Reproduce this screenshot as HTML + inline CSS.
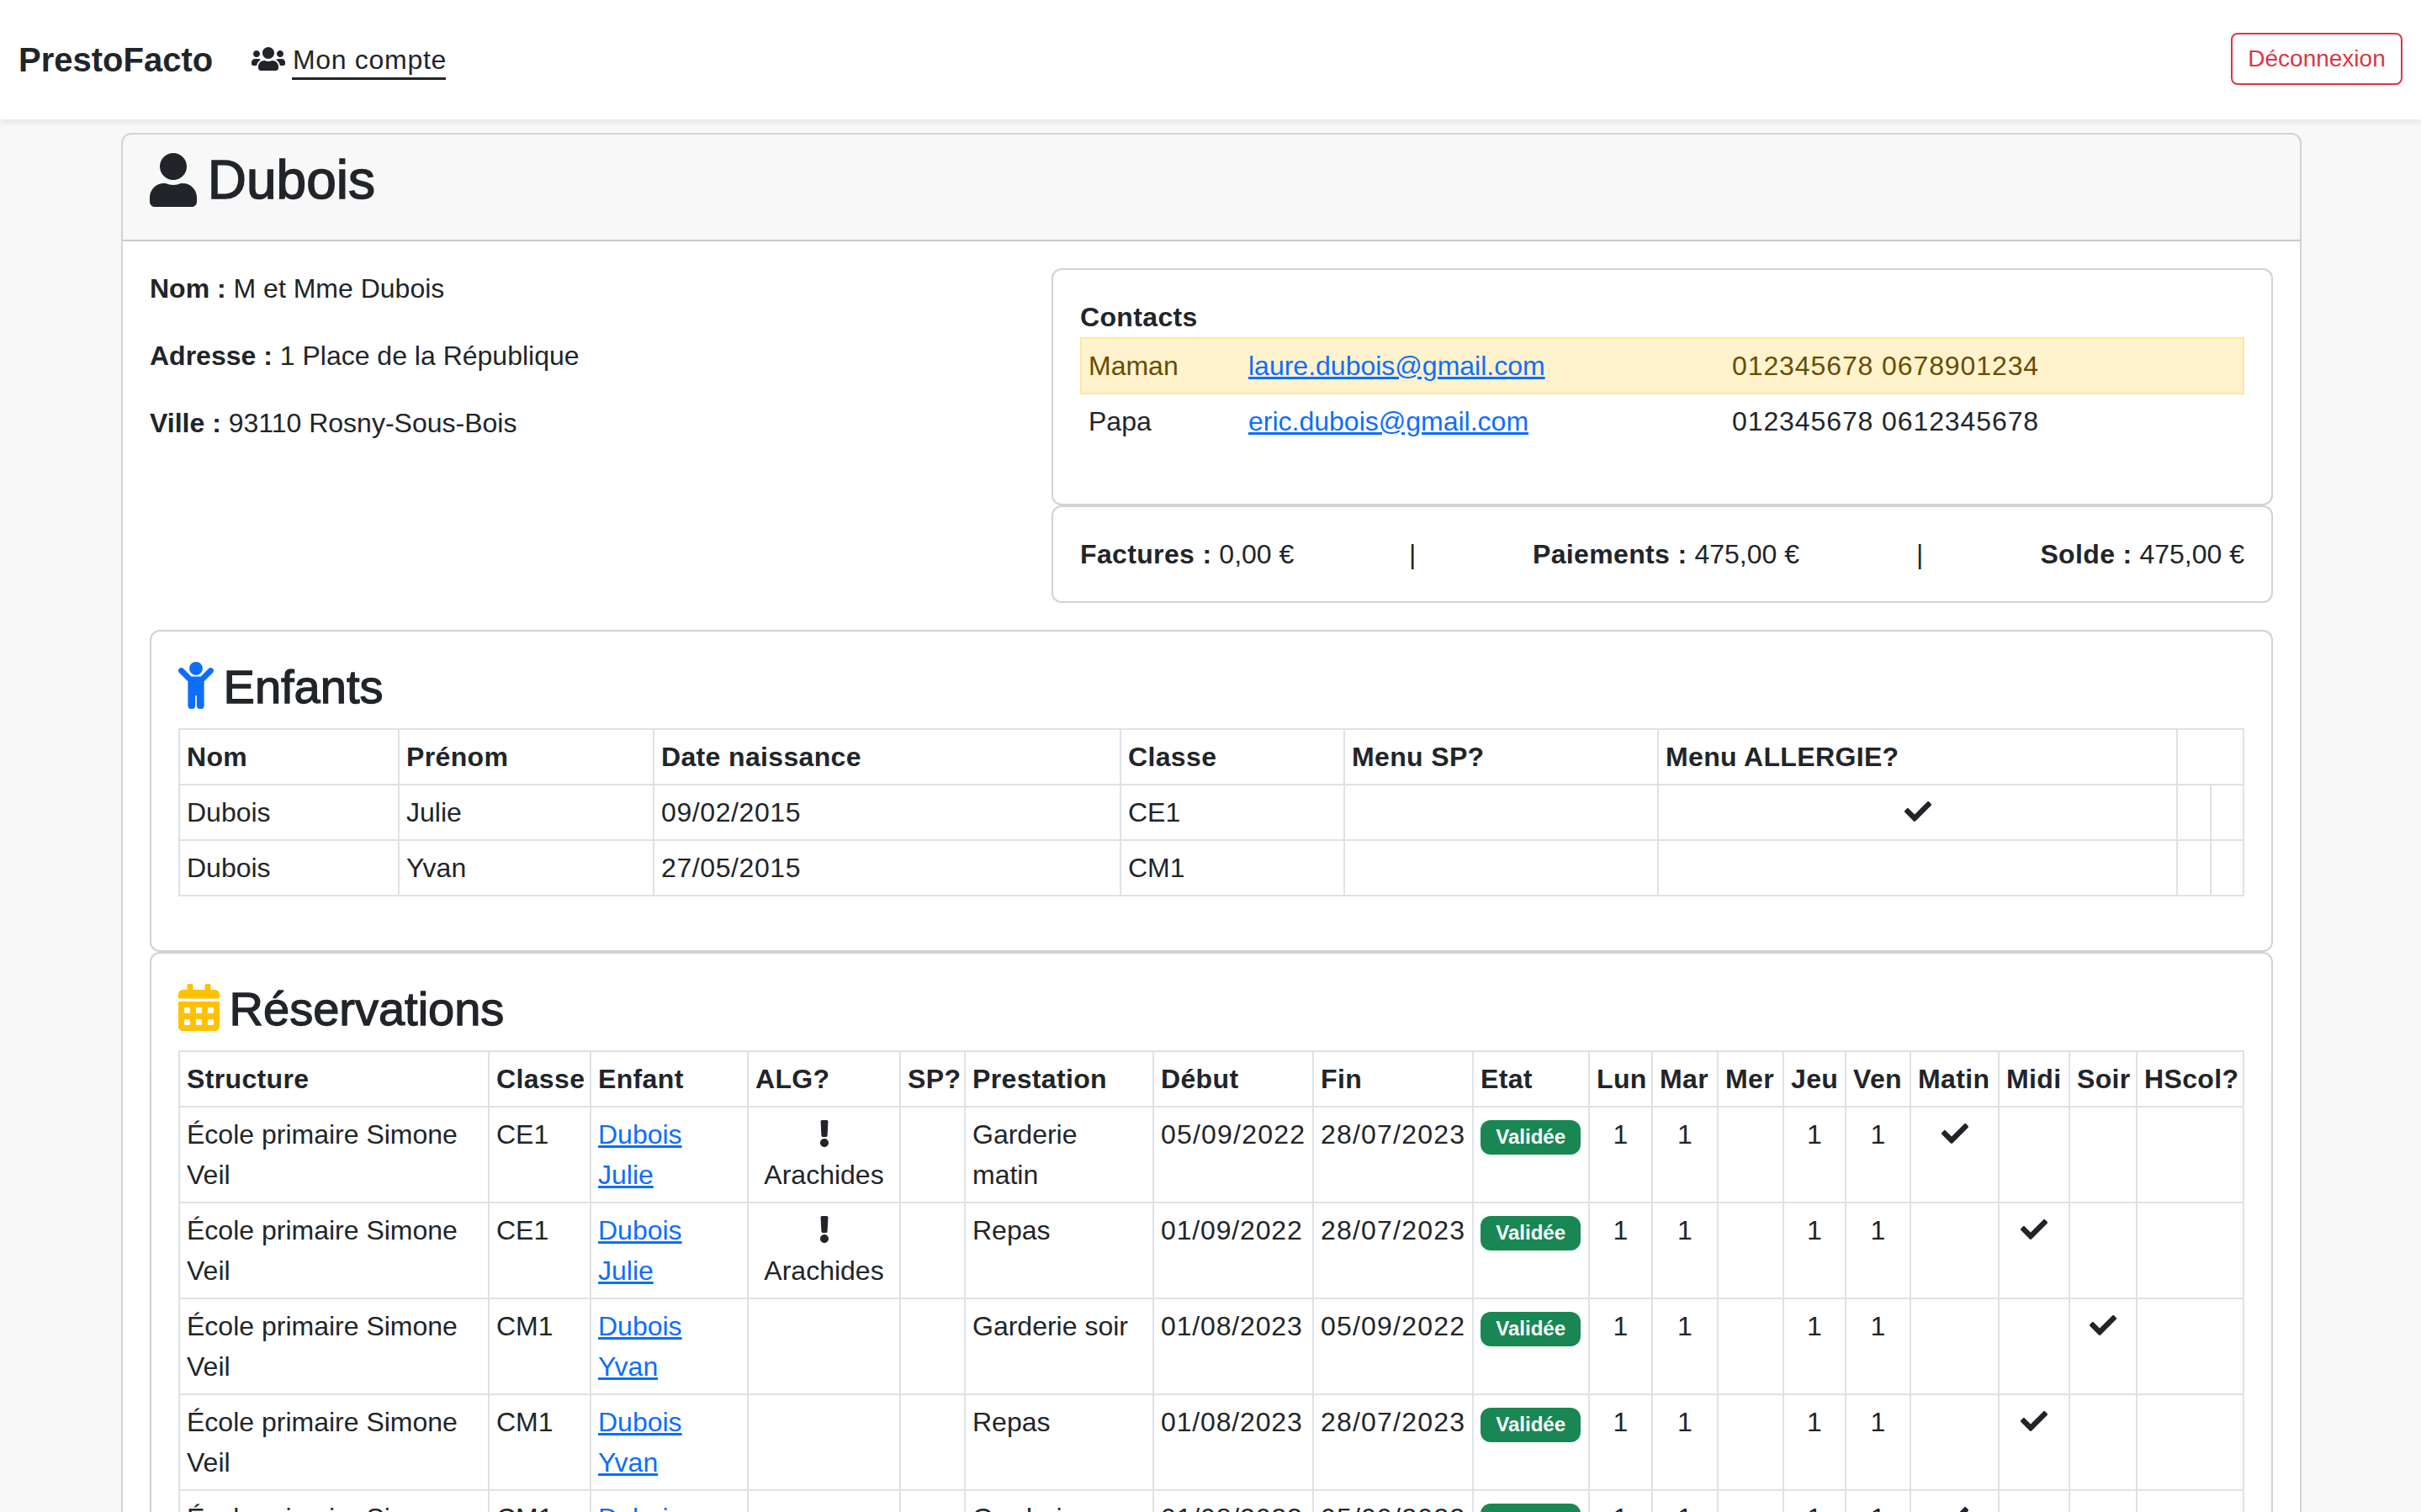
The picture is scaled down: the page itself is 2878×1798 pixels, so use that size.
<!DOCTYPE html>
<html><head><meta charset="utf-8">
<style>
*{box-sizing:border-box}
html,body{margin:0;padding:0}
body{width:2878px;height:1798px;overflow:hidden;position:relative;background:#f8f8f8;
font-family:"Liberation Sans",sans-serif;font-size:32px;line-height:48px;color:#212529}
.abs{position:absolute}
nav{position:absolute;left:0;top:0;width:2878px;height:142px;background:#fff;box-shadow:0 4px 8px rgba(0,0,0,.075)}
.brand{position:absolute;left:22px;top:41px;font-size:40px;line-height:60px;font-weight:bold;color:#212529}
.navlink{position:absolute;left:299px;top:47px;line-height:48px;white-space:nowrap}
.navlink span{letter-spacing:.7px}
.uline{position:absolute;left:347px;top:92px;width:183px;height:3px;background:#212529}
.btn{position:absolute;left:2652px;top:39px;width:204px;height:62px;border:2px solid #dc3545;border-radius:8px;color:#dc3545;font-size:28px;line-height:42px;text-align:center;padding-top:8px}
svg.fa{display:inline-block;height:1em;vertical-align:-.125em;overflow:visible;fill:currentColor}
.card{position:absolute;left:144px;top:158px;width:2592px;height:1700px;background:#fff;border:2px solid rgba(0,0,0,.175);border-radius:12px}
.card-h{position:absolute;left:0;top:0;width:2588px;height:126.8px;background:rgba(33,37,41,.03);border-bottom:2px solid rgba(0,0,0,.175);border-radius:10px 10px 0 0}
.h2{position:absolute;left:32px;top:16px;font-size:64px;line-height:76.8px;font-weight:500;white-space:nowrap;-webkit-text-stroke:1.5px #212529}
.h2 svg{margin-right:-5px}
.h3 svg{margin-right:-4px}
p.info{margin:0 0 32px 0;white-space:nowrap}
p.info b{letter-spacing:0}
b,th,.bold{font-weight:bold;letter-spacing:.35px}
.num{letter-spacing:1.2px}
.box{position:absolute;background:#fff;border:2px solid rgba(0,0,0,.175);border-radius:12px;padding:32px}
.h3{font-size:56px;line-height:67.2px;margin:0 0 16px 0;font-weight:500;white-space:nowrap;-webkit-text-stroke:1.3px #212529}
table{border-collapse:collapse;table-layout:fixed}
td,th{padding:8px 8px;border:2px solid #dee2e6;vertical-align:top;text-align:left;white-space:nowrap;overflow:visible}
.nob td{border-color:transparent}
a{color:#0d6efd;text-decoration:underline}
.c{text-align:center}
.badge{display:inline-block;background:#198754;color:#fff;font-size:24px;line-height:24px;font-weight:bold;padding:8.4px 18.3px;border-radius:12px;vertical-align:baseline}
</style></head>
<body>
<nav>
  <div class="brand">PrestoFacto</div>
  <div class="navlink"><svg class="fa" viewBox="0 0 640 512" style="width:40px"><path d="M96 224c35.3 0 64-28.7 64-64s-28.7-64-64-64-64 28.7-64 64 28.7 64 64 64zm448 0c35.3 0 64-28.7 64-64s-28.7-64-64-64-64 28.7-64 64 28.7 64 64 64zm32 32h-64c-17.6 0-33.5 7.1-45.1 18.6 40.3 22.1 68.9 62 75.1 109.4h66c17.7 0 32-14.3 32-32v-32c0-35.3-28.7-64-64-64zm-256 0c61.9 0 112-50.1 112-112S381.9 32 320 32 208 82.1 208 144s50.1 112 112 112zm76.8 32h-8.3c-20.8 10-43.9 16-68.5 16s-47.6-6-68.5-16h-8.3C179.6 288 128 339.6 128 403.2V432c0 26.5 21.5 48 48 48h288c26.5 0 48-21.5 48-48v-28.8c0-63.6-51.6-115.2-115.2-115.2zm-223.7-13.4C161.5 263.1 145.6 256 128 256H64c-35.3 0-64 28.7-64 64v32c0 17.7 14.3 32 32 32h65.9c6.3-47.4 34.9-87.3 75.2-109.4z"/></svg> <span>Mon compte</span></div>
  <div class="uline"></div>
  <div class="btn">Déconnexion</div>
</nav>

<div class="card">
  <div class="card-h">
    <div class="h2"><svg class="fa" viewBox="0 0 448 512" style="width:56px;vertical-align:-.155em"><path d="M224 256c70.7 0 128-57.3 128-128S294.7 0 224 0 96 57.3 96 128s57.3 128 128 128zm89.6 32h-16.7c-22.2 10.2-46.9 16-72.9 16s-50.6-5.8-72.9-16h-16.7C60.2 288 0 348.2 0 422.4V464c0 26.5 21.5 48 48 48h352c26.5 0 48-21.5 48-48v-41.6c0-74.2-60.2-134.4-134.4-134.4z"/></svg> Dubois</div>
  </div>
</div>

<!-- left info -->
<div class="abs" style="left:178px;top:318.8px">
  <p class="info"><b>Nom :</b> M et Mme Dubois</p>
  <p class="info"><b>Adresse :</b> 1 Place de la République</p>
  <p class="info"><b>Ville :</b> 93110 Rosny-Sous-Bois</p>
</div>

<!-- contacts -->
<div class="box" style="left:1250px;top:319px;width:1452px;height:282px">
  <div class="bold" style="line-height:48px">Contacts</div>
  <div class="abs" style="left:32px;top:80px;width:1384px;height:68px;background:#fff3cd;border:2px solid #ffe69c"></div>
  <table style="width:1384px;position:relative" class="nob">
    <col style="width:190px"><col style="width:575px"><col style="width:617px">
    <tr style="color:#664d03"><td>Maman</td><td><a href="#">laure.dubois@gmail.com</a></td><td class="num" style="letter-spacing:.9px">012345678 0678901234</td></tr>
    <tr><td>Papa</td><td><a href="#">eric.dubois@gmail.com</a></td><td class="num" style="letter-spacing:.9px">012345678 0612345678</td></tr>
  </table>
</div>
<div class="box" style="left:1250px;top:601px;width:1452px;height:116px">
  <div class="abs" style="left:32px;top:32px;white-space:nowrap"><b>Factures :</b> 0,00 €</div>
  <div class="abs" style="left:423px;top:32px">|</div>
  <div class="abs" style="left:570px;top:32px;white-space:nowrap"><b>Paiements :</b> 475,00 €</div>
  <div class="abs" style="left:1026px;top:32px">|</div>
  <div class="abs" style="right:32px;top:32px;white-space:nowrap"><b>Solde :</b> 475,00 €</div>
</div>

<!-- enfants -->
<div class="box" style="left:178px;top:749px;width:2524px;height:383px">
  <div class="h3"><svg class="fa" viewBox="0 0 384 512" style="width:42px;color:#0d6efd"><path d="M120 72c0-39.765 32.235-72 72-72s72 32.235 72 72c0 39.764-32.235 72-72 72s-72-32.236-72-72zm254.627 1.373c-12.496-12.497-32.758-12.497-45.254 0L242.745 160H141.254L54.627 73.373c-12.496-12.497-32.758-12.497-45.254 0-12.497 12.497-12.497 32.758 0 45.255L104 213.254V480c0 17.673 14.327 32 32 32h16c17.673 0 32-14.327 32-32V368h16v112c0 17.673 14.327 32 32 32h16c17.673 0 32-14.327 32-32V213.254l94.627-94.627c12.497-12.497 12.497-32.757 0-45.254z"/></svg> Enfants</div>
  <table style="width:2456px">
    <col style="width:261px"><col style="width:303px"><col style="width:555px"><col style="width:266px"><col style="width:373px"><col style="width:617px"><col style="width:40px"><col style="width:39px">
    <tr><th>Nom</th><th>Prénom</th><th>Date naissance</th><th>Classe</th><th>Menu SP?</th><th>Menu ALLERGIE?</th><th colspan="2"></th></tr>
    <tr><td>Dubois</td><td>Julie</td><td class="num" style="letter-spacing:.6px">09/02/2015</td><td>CE1</td><td></td><td class="c"><svg class="fa" viewBox="0 0 512 512" style="width:32px"><path d="M173.898 439.404l-166.4-166.4c-9.997-9.997-9.997-26.206 0-36.204l36.203-36.204c9.997-9.998 26.207-9.998 36.204 0L192 312.69 432.095 72.596c9.997-9.997 26.207-9.997 36.204 0l36.203 36.204c9.997 9.997 9.997 26.206 0 36.204l-294.4 294.401c-9.998 9.997-26.207 9.997-36.204-.001z"/></svg></td><td></td><td></td></tr>
    <tr><td>Dubois</td><td>Yvan</td><td class="num" style="letter-spacing:.6px">27/05/2015</td><td>CM1</td><td></td><td></td><td></td><td></td></tr>
  </table>
</div>

<!-- reservations -->
<div class="box" style="left:178px;top:1132px;width:2524px;height:900px;border-bottom:none;border-radius:12px 12px 0 0">
  <div class="h3"><svg class="fa" viewBox="0 0 448 512" style="width:49px;color:#ffc107"><path d="M0 464c0 26.5 21.5 48 48 48h352c26.5 0 48-21.5 48-48V192H0v272zm320-196c0-6.6 5.4-12 12-12h40c6.6 0 12 5.4 12 12v40c0 6.6-5.4 12-12 12h-40c-6.6 0-12-5.4-12-12v-40zm0 128c0-6.6 5.4-12 12-12h40c6.6 0 12 5.4 12 12v40c0 6.6-5.4 12-12 12h-40c-6.6 0-12-5.4-12-12v-40zM192 268c0-6.6 5.4-12 12-12h40c6.6 0 12 5.4 12 12v40c0 6.6-5.4 12-12 12h-40c-6.6 0-12-5.4-12-12v-40zm0 128c0-6.6 5.4-12 12-12h40c6.6 0 12 5.4 12 12v40c0 6.6-5.4 12-12 12h-40c-6.6 0-12-5.4-12-12v-40zM64 268c0-6.6 5.4-12 12-12h40c6.6 0 12 5.4 12 12v40c0 6.6-5.4 12-12 12H76c-6.6 0-12-5.4-12-12v-40zm0 128c0-6.6 5.4-12 12-12h40c6.6 0 12 5.4 12 12v40c0 6.6-5.4 12-12 12H76c-6.6 0-12-5.4-12-12v-40zM400 64h-48V16c0-8.8-7.2-16-16-16h-32c-8.8 0-16 7.2-16 16v48H160V16c0-8.8-7.2-16-16-16h-32c-8.8 0-16 7.2-16 16v48H48C21.5 64 0 85.5 0 112v48h448v-48c0-26.5-21.5-48-48-48z"/></svg> Réservations</div>
  <table id="resa" style="width:2456px">
    <col style="width:368px"><col style="width:121px"><col style="width:187px"><col style="width:181px"><col style="width:77px"><col style="width:224px"><col style="width:190px"><col style="width:190px"><col style="width:138px"><col style="width:75px"><col style="width:78px"><col style="width:78px"><col style="width:74px"><col style="width:77px"><col style="width:105px"><col style="width:84px"><col style="width:80px"><col style="width:127px">
    <tr><th>Structure</th><th>Classe</th><th>Enfant</th><th>ALG?</th><th>SP?</th><th>Prestation</th><th>Début</th><th>Fin</th><th>Etat</th><th>Lun</th><th>Mar</th><th>Mer</th><th>Jeu</th><th>Ven</th><th>Matin</th><th>Midi</th><th>Soir</th><th>HScol?</th></tr>
    <tr><td>École primaire Simone<br>Veil</td><td>CE1</td><td><a href="#">Dubois<br>Julie</a></td><td class="c"><svg class="fa" viewBox="0 0 192 512" style="width:12px"><path d="M176 432c0 44.112-35.888 80-80 80s-80-35.888-80-80 35.888-80 80-80 80 35.888 80 80zM25.26 25.199l13.6 272C39.499 309.972 50.041 320 62.83 320h66.34c12.789 0 23.331-10.028 23.97-22.801l13.6-272C167.425 11.49 156.496 0 142.77 0H49.23C35.504 0 24.575 11.49 25.26 25.199z"/></svg><br>Arachides</td><td></td><td>Garderie<br>matin</td><td style="letter-spacing:1.2px">05/09/2022</td><td style="letter-spacing:1.2px">28/07/2023</td><td><span class="badge">Validée</span></td><td class="c">1</td><td class="c">1</td><td class="c"></td><td class="c">1</td><td class="c">1</td><td class="c"><svg class="fa" viewBox="0 0 512 512" style="width:32px"><path d="M173.898 439.404l-166.4-166.4c-9.997-9.997-9.997-26.206 0-36.204l36.203-36.204c9.997-9.998 26.207-9.998 36.204 0L192 312.69 432.095 72.596c9.997-9.997 26.207-9.997 36.204 0l36.203 36.204c9.997 9.997 9.997 26.206 0 36.204l-294.4 294.401c-9.998 9.997-26.207 9.997-36.204-.001z"/></svg></td><td class="c"></td><td class="c"></td><td></td></tr>
<tr><td>École primaire Simone<br>Veil</td><td>CE1</td><td><a href="#">Dubois<br>Julie</a></td><td class="c"><svg class="fa" viewBox="0 0 192 512" style="width:12px"><path d="M176 432c0 44.112-35.888 80-80 80s-80-35.888-80-80 35.888-80 80-80 80 35.888 80 80zM25.26 25.199l13.6 272C39.499 309.972 50.041 320 62.83 320h66.34c12.789 0 23.331-10.028 23.97-22.801l13.6-272C167.425 11.49 156.496 0 142.77 0H49.23C35.504 0 24.575 11.49 25.26 25.199z"/></svg><br>Arachides</td><td></td><td>Repas</td><td style="letter-spacing:0.85px">01/09/2022</td><td style="letter-spacing:1.2px">28/07/2023</td><td><span class="badge">Validée</span></td><td class="c">1</td><td class="c">1</td><td class="c"></td><td class="c">1</td><td class="c">1</td><td class="c"></td><td class="c"><svg class="fa" viewBox="0 0 512 512" style="width:32px"><path d="M173.898 439.404l-166.4-166.4c-9.997-9.997-9.997-26.206 0-36.204l36.203-36.204c9.997-9.998 26.207-9.998 36.204 0L192 312.69 432.095 72.596c9.997-9.997 26.207-9.997 36.204 0l36.203 36.204c9.997 9.997 9.997 26.206 0 36.204l-294.4 294.401c-9.998 9.997-26.207 9.997-36.204-.001z"/></svg></td><td class="c"></td><td></td></tr>
<tr><td>École primaire Simone<br>Veil</td><td>CM1</td><td><a href="#">Dubois<br>Yvan</a></td><td class="c"></td><td></td><td>Garderie soir</td><td style="letter-spacing:0.85px">01/08/2023</td><td style="letter-spacing:1.2px">05/09/2022</td><td><span class="badge">Validée</span></td><td class="c">1</td><td class="c">1</td><td class="c"></td><td class="c">1</td><td class="c">1</td><td class="c"></td><td class="c"></td><td class="c"><svg class="fa" viewBox="0 0 512 512" style="width:32px"><path d="M173.898 439.404l-166.4-166.4c-9.997-9.997-9.997-26.206 0-36.204l36.203-36.204c9.997-9.998 26.207-9.998 36.204 0L192 312.69 432.095 72.596c9.997-9.997 26.207-9.997 36.204 0l36.203 36.204c9.997 9.997 9.997 26.206 0 36.204l-294.4 294.401c-9.998 9.997-26.207 9.997-36.204-.001z"/></svg></td><td></td></tr>
<tr><td>École primaire Simone<br>Veil</td><td>CM1</td><td><a href="#">Dubois<br>Yvan</a></td><td class="c"></td><td></td><td>Repas</td><td style="letter-spacing:0.85px">01/08/2023</td><td style="letter-spacing:1.2px">28/07/2023</td><td><span class="badge">Validée</span></td><td class="c">1</td><td class="c">1</td><td class="c"></td><td class="c">1</td><td class="c">1</td><td class="c"></td><td class="c"><svg class="fa" viewBox="0 0 512 512" style="width:32px"><path d="M173.898 439.404l-166.4-166.4c-9.997-9.997-9.997-26.206 0-36.204l36.203-36.204c9.997-9.998 26.207-9.998 36.204 0L192 312.69 432.095 72.596c9.997-9.997 26.207-9.997 36.204 0l36.203 36.204c9.997 9.997 9.997 26.206 0 36.204l-294.4 294.401c-9.998 9.997-26.207 9.997-36.204-.001z"/></svg></td><td class="c"></td><td></td></tr>
<tr><td>École primaire Simone<br>Veil</td><td>CM1</td><td><a href="#">Dubois<br>Yvan</a></td><td class="c"></td><td></td><td>Garderie<br>matin</td><td style="letter-spacing:0.85px">01/08/2023</td><td style="letter-spacing:1.2px">05/09/2022</td><td><span class="badge">Validée</span></td><td class="c">1</td><td class="c">1</td><td class="c"></td><td class="c">1</td><td class="c">1</td><td class="c"><svg class="fa" viewBox="0 0 512 512" style="width:32px"><path d="M173.898 439.404l-166.4-166.4c-9.997-9.997-9.997-26.206 0-36.204l36.203-36.204c9.997-9.998 26.207-9.998 36.204 0L192 312.69 432.095 72.596c9.997-9.997 26.207-9.997 36.204 0l36.203 36.204c9.997 9.997 9.997 26.206 0 36.204l-294.4 294.401c-9.998 9.997-26.207 9.997-36.204-.001z"/></svg></td><td class="c"></td><td class="c"></td><td></td></tr>
  </table>
</div>
</body></html>
